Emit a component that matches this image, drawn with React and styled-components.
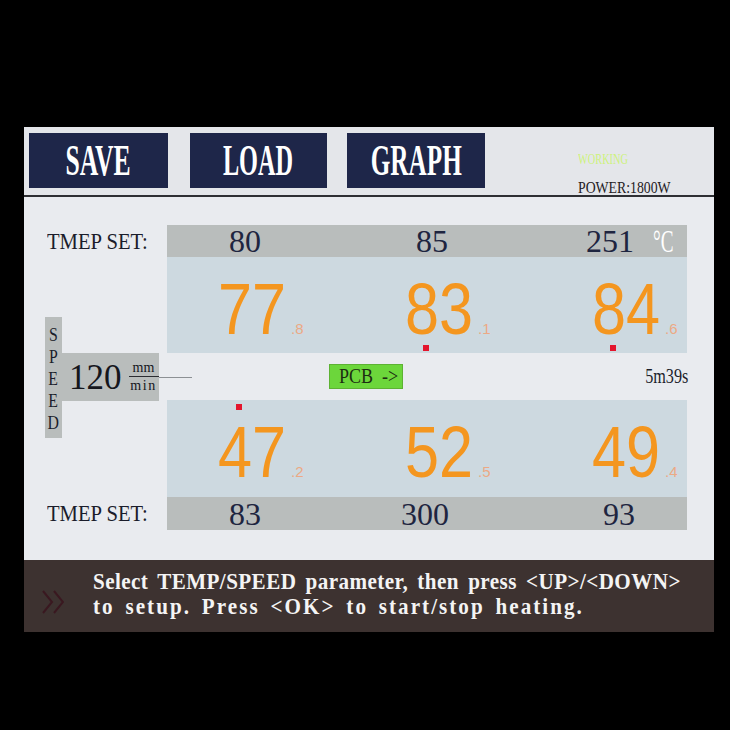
import React from 'react';
import styled, { createGlobalStyle } from 'styled-components';

const SERIF = `'Liberation Serif', 'DejaVu Serif', serif`;
const SANS = `'Liberation Sans', Arial, sans-serif`;

const GlobalStyle = createGlobalStyle`
  html, body {
    margin: 0;
    padding: 0;
    background: #000;
  }
`;

const upper = [
  { whole: '77', frac: '.8' },
  { whole: '83', frac: '.1', marker: true },
  { whole: '84', frac: '.6', marker: true },
];

const lower = [
  { whole: '47', frac: '.2', marker: true },
  { whole: '52', frac: '.5' },
  { whole: '49', frac: '.4' },
];

const App = () => {
  return (
    <Page>
      <GlobalStyle />
      <Screen>
        <TopBar>
          <MenuButton $w={139} $gap={22}><Squeeze $x={0.57} $origin="center">SAVE</Squeeze></MenuButton>
          <MenuButton $w={137} $gap={20}><Squeeze $x={0.54} $origin="center">LOAD</Squeeze></MenuButton>
          <MenuButton $w={138} $gap={0}><Squeeze $x={0.56} $origin="center">GRAPH</Squeeze></MenuButton>
          <Status>
            <Working><Squeeze $x={0.69}>WORKING</Squeeze></Working>
            <Power><Squeeze $x={0.81}>POWER:1800W</Squeeze></Power>
          </Status>
        </TopBar>

        <Main>
          <SetLabel $row={2}><Squeeze $x={0.86}>TMEP SET:</Squeeze></SetLabel>
          <SetBar $row={2}>
            <SetValue>80</SetValue>
            <SetValue>85</SetValue>
            <SetCell>
              <SetValue $dx={-9}>251</SetValue>
              <Unit><Squeeze $x={0.6}>°C</Squeeze></Unit>
            </SetCell>
          </SetBar>

          <Panel $row={3}>
            {upper.map((r) => (
              <Reading key={r.whole}>
                <Whole>{r.whole}</Whole>
                <Decimal>{r.frac}</Decimal>
                {r.marker && <Marker $top={88} />}
              </Reading>
            ))}
          </Panel>

          <SpeedArea>
            <SpeedStrip>
              {'SPEED'.split('').map((ch, i) => (
                <StripLetter key={i}><Squeeze $x={0.8} $origin="center">{ch}</Squeeze></StripLetter>
              ))}
            </SpeedStrip>
            <SpeedBox>
              <SpeedValue>120</SpeedValue>
              <UnitStack>
                <span>mm</span>
                <UnitBar />
                <UnitLow>min</UnitLow>
              </UnitStack>
            </SpeedBox>
            <Connector />
          </SpeedArea>

          <TransferRow>
            <PcbBadge><Squeeze $x={0.9}>{'PCB  ->'}</Squeeze></PcbBadge>
            <Timer><Squeeze $x={0.81} $origin="right">5m39s</Squeeze></Timer>
          </TransferRow>

          <Panel $row={5}>
            {lower.map((r) => (
              <Reading key={r.whole}>
                <Whole>{r.whole}</Whole>
                <Decimal>{r.frac}</Decimal>
                {r.marker && <Marker $top={4} />}
              </Reading>
            ))}
          </Panel>

          <SetLabel $row={6}><Squeeze $x={0.86}>TMEP SET:</Squeeze></SetLabel>
          <SetBar $row={6}>
            <SetValue>83</SetValue>
            <SetValue $dx={-7}>300</SetValue>
            <SetValue>93</SetValue>
          </SetBar>
        </Main>

        <Footer>
          <Chevrons viewBox="0 0 22 24">
            <polyline points="1,1 10,12 1,23" />
            <polyline points="12,1 21,12 12,23" />
          </Chevrons>
          <Hint>
            <HintLine $spacing={0.48}>{'Select TEMP/SPEED parameter, then press <UP>/<DOWN>'}</HintLine>
            <HintLine $spacing={2.3}>{'to setup. Press <OK> to start/stop heating.'}</HintLine>
          </Hint>
        </Footer>
      </Screen>
    </Page>
  );
};

const Squeeze = styled.span`
  display: inline-block;
  white-space: pre;
  transform: scaleX(${(p) => p.$x});
  transform-origin: ${(p) => p.$origin || 'left'} center;
`;

const Page = styled.div`
  width: 730px;
  height: 730px;
  box-sizing: border-box;
  padding: 127px 16px 0 24px;
  background: #000;
`;

const Screen = styled.div`
  width: 690px;
  height: 505px;
  display: flex;
  flex-direction: column;
  overflow: hidden;
`;

const TopBar = styled.div`
  height: 70px;
  box-sizing: border-box;
  display: flex;
  align-items: flex-start;
  padding: 6px 0 0 5px;
  background: #e4e6ea;
  border-bottom: 2px solid #2e2f33;
`;

const MenuButton = styled.div`
  width: ${(p) => p.$w}px;
  height: 55px;
  margin-right: ${(p) => p.$gap}px;
  display: flex;
  align-items: center;
  justify-content: center;
  background: #1e2649;
  color: #fff;
  font-family: ${SERIF};
  font-weight: bold;
  font-size: 45px;
  line-height: 1;
`;

const Status = styled.div`
  margin-left: 93px;
  padding-top: 16px;
  display: flex;
  flex-direction: column;
  font-family: ${SERIF};
`;

const Working = styled.div`
  font-size: 15px;
  line-height: 20px;
  color: #cdf27c;
`;

const Power = styled.div`
  margin-top: 9px;
  font-size: 17px;
  line-height: 20px;
  color: #1f2024;
`;

const Main = styled.div`
  height: 363px;
  display: grid;
  grid-template-columns: 143px 520px;
  grid-template-rows: 28px 32px 96px 47px 97px 33px 30px;
  background: #e9ebef;
`;

const SetLabel = styled.div`
  grid-column: 1;
  grid-row: ${(p) => p.$row};
  display: flex;
  align-items: center;
  padding-left: 23px;
  font-family: ${SERIF};
  font-size: 24px;
  color: #1b1d2b;
`;

const SetBar = styled.div`
  grid-column: 2;
  grid-row: ${(p) => p.$row};
  display: grid;
  grid-template-columns: 187px 187px 1fr;
  align-items: center;
  padding-left: 51px;
  background: #b9bdbc;
  font-family: ${SERIF};
  font-size: 32px;
  line-height: 1;
  color: #1e2540;
`;

const SetCell = styled.div`
  display: flex;
  align-items: center;
`;

const SetValue = styled.span`
  width: 54px;
  margin-left: ${(p) => p.$dx || 0}px;
  text-align: center;
`;

const Unit = styled.span`
  margin-left: 16px;
  color: #fff;
`;

const Panel = styled.div`
  grid-column: 2;
  grid-row: ${(p) => p.$row};
  display: grid;
  grid-template-columns: 187px 187px 1fr;
  padding-left: 51px;
  background: #cdd9e0;
`;

const Reading = styled.div`
  position: relative;
  display: flex;
  align-items: baseline;
  padding-top: 16px;
`;

const Whole = styled.span`
  display: inline-block;
  margin-right: -12px;
  font-family: ${SANS};
  font-size: 72px;
  line-height: 1;
  color: #f4961f;
  transform: scaleX(0.85);
  transform-origin: left center;
`;

const Decimal = styled.span`
  margin-left: 5px;
  font-family: ${SANS};
  font-size: 15px;
  color: #eca985;
`;

const Marker = styled.span`
  position: absolute;
  left: 18px;
  top: ${(p) => p.$top}px;
  width: 6px;
  height: 6px;
  background: #e3152d;
`;

const SpeedArea = styled.div`
  grid-column: 1;
  grid-row: 3 / 6;
  position: relative;
  z-index: 1;
  display: flex;
  align-items: center;
  padding-left: 21px;
`;

const SpeedStrip = styled.div`
  flex-shrink: 0;
  width: 17px;
  height: 121px;
  box-sizing: border-box;
  padding-top: 6px;
  display: flex;
  flex-direction: column;
  align-items: center;
  background: #b9bdbc;
  font-family: ${SERIF};
  font-size: 19.8px;
  color: #1b1d2b;
`;

const StripLetter = styled.span`
  height: 22px;
  line-height: 22px;
`;

const SpeedBox = styled.div`
  flex-shrink: 0;
  width: 97px;
  height: 48px;
  box-sizing: border-box;
  padding-left: 7px;
  display: flex;
  align-items: center;
  background: #b9bdbc;
`;

const SpeedValue = styled.span`
  font-family: ${SERIF};
  font-size: 35px;
  line-height: 1;
  color: #15161c;
`;

const UnitStack = styled.div`
  margin-left: 7px;
  display: flex;
  flex-direction: column;
  align-items: center;
  font-family: ${SERIF};
  font-size: 14px;
  line-height: 12px;
  color: #15161c;
`;

const UnitLow = styled.span`
  letter-spacing: 1.5px;
`;

const UnitBar = styled.div`
  width: 30px;
  height: 1px;
  margin: 2px 0 3px;
  background: #2a2b30;
`;

const Connector = styled.div`
  flex-shrink: 0;
  width: 33px;
  height: 1px;
  background: #8c9094;
`;

const TransferRow = styled.div`
  grid-column: 2;
  grid-row: 4;
  display: flex;
  align-items: center;
  justify-content: space-between;
  padding-left: 162px;
`;

const PcbBadge = styled.div`
  width: 74px;
  height: 25px;
  box-sizing: border-box;
  padding-left: 9px;
  display: flex;
  align-items: center;
  overflow: hidden;
  background: #6cd63b;
  border: 1px solid #5db233;
  font-family: ${SERIF};
  font-size: 20px;
  color: #1d2d12;
`;

const Timer = styled.div`
  margin-right: -1px;
  font-family: ${SERIF};
  font-size: 20px;
  color: #1b1d2b;
`;

const Footer = styled.div`
  height: 72px;
  box-sizing: border-box;
  padding: 9px 0 0 18px;
  display: flex;
  align-items: flex-start;
  overflow: hidden;
  background: #3d3230;
`;

const Chevrons = styled.svg`
  flex-shrink: 0;
  width: 22px;
  height: 24px;
  margin-top: 21px;
  fill: none;
  stroke: #3a1820;
  stroke-width: 2;
`;

const Hint = styled.div`
  margin-left: 29px;
  display: flex;
  flex-direction: column;
  font-family: ${SERIF};
  font-weight: bold;
  font-size: 24px;
  line-height: 25px;
  color: #f4f4f4;
`;

const HintLine = styled.span`
  display: inline-block;
  align-self: flex-start;
  white-space: pre;
  letter-spacing: ${(p) => p.$spacing}px;
  word-spacing: 4px;
  transform: scaleX(0.88);
  transform-origin: left center;
`;

export default App;
